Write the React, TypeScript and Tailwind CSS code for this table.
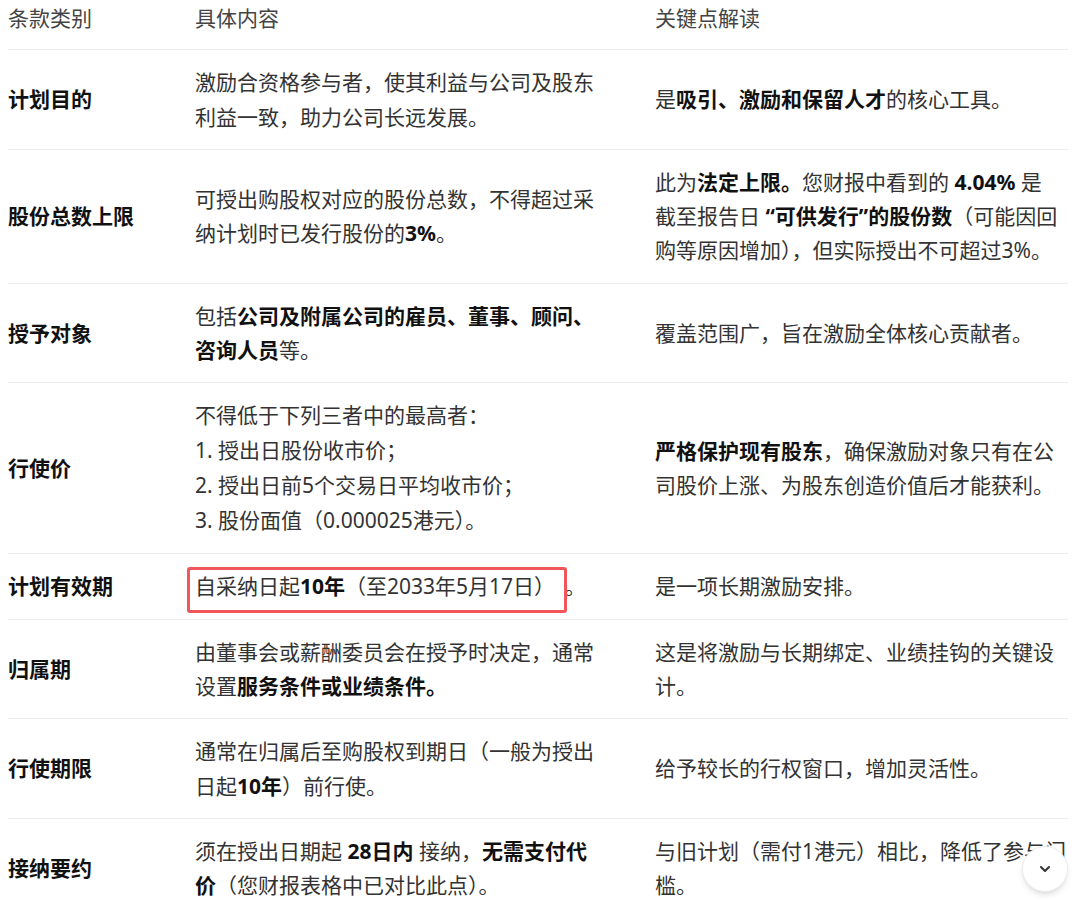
import type { ReactNode } from 'react';
import { HiChevronDown } from 'react-icons/hi';

type Row = {
  term: string;
  content: ReactNode;
  note: ReactNode;
  list?: boolean;
};

const B = ({ children }: { children: ReactNode }) => (
  <strong className="font-bold text-[#111]">{children}</strong>
);

const ROWS: Row[] = [
  {
    term: '计划目的',
    content: '激励合资格参与者，使其利益与公司及股东利益一致，助力公司长远发展。',
    note: (
      <>
        是<B>吸引、激励和保留人才</B>的核心工具。
      </>
    )
  },
  {
    term: '股份总数上限',
    content: (
      <>
        可授出购股权对应的股份总数，不得超过采纳计划时已发行股份的<B>3%</B>。
      </>
    ),
    note: (
      <>
        此为<B>法定上限。</B>您财报中看到的 <B>4.04%</B> 是<br />
        截至报告日 <B>“可供发行”的股份数</B>（可能因回<br />
        购等原因增加），但实际授出不可超过3%。
      </>
    )
  },
  {
    term: '授予对象',
    content: (
      <>
        包括<B>公司及附属公司的雇员、董事、顾问、咨询人员</B>等。
      </>
    ),
    note: '覆盖范围广，旨在激励全体核心贡献者。'
  },
  {
    term: '行使价',
    list: true,
    content: (
      <>
        <div>不得低于下列三者中的最高者：</div>
        <div>1. 授出日股份收市价；</div>
        <div>2. 授出日前5个交易日平均收市价；</div>
        <div>3. 股份面值（0.000025港元）。</div>
      </>
    ),
    note: (
      <>
        <B>严格保护现有股东</B>，确保激励对象只有在公司股价上涨、为股东创造价值后才能获利。
      </>
    )
  },
  {
    term: '计划有效期',
    content: (
      <>
        <span className="relative">
          自采纳日起<B>10年</B>（至2033年5月17日）
          <span className="absolute -left-[8px] -right-[22px] -top-[5px] -bottom-[13px] rounded-[3px] border-[3px] border-[#f0565a]" />
        </span>
        <span className="ml-[20px]">。</span>
      </>
    ),
    note: '是一项长期激励安排。'
  },
  {
    term: '归属期',
    content: (
      <>
        由董事会或薪酬委员会在授予时决定，通常设置<B>服务条件或业绩条件。</B>
      </>
    ),
    note: '这是将激励与长期绑定、业绩挂钩的关键设计。'
  },
  {
    term: '行使期限',
    content: (
      <>
        通常在归属后至购股权到期日（一般为授出日起<B>10年</B>）前行使。
      </>
    ),
    note: '给予较长的行权窗口，增加灵活性。'
  },
  {
    term: '接纳要约',
    content: (
      <>
        须在授出日期起 <B>28日内</B> 接纳，<B>无需支付代价</B>（您财报表格中已对比此点）。
      </>
    ),
    note: '与旧计划（需付1港元）相比，降低了参与门槛。'
  }
];

export default function App() {
  return (
    <div
      className="relative h-[900px] w-full overflow-hidden bg-white text-[21px] leading-[34.3px] text-[#333]"
      style={{ fontFamily: '"Noto Sans", "Noto Sans CJK SC", sans-serif' }}
    >
      <div className="ml-[8px] w-[1060px]">
        {/* header */}
        <div className="grid grid-cols-[187px_460px_413px] border-b border-[#ececec] pt-px pb-[14px] text-[#444]">
          <div>条款类别</div>
          <div>具体内容</div>
          <div>关键点解读</div>
        </div>

        {ROWS.map((row) => (
          <div
            key={row.term}
            className="grid grid-cols-[187px_460px_413px] items-center border-b border-[#ececec] py-[15px]"
          >
            <div className="font-bold text-[#111]">{row.term}</div>
            <div className={row.list ? 'pr-[55px] leading-[35px]' : 'pr-[55px]'}>{row.content}</div>
            <div>{row.note}</div>
          </div>
        ))}
      </div>

      <button className="fixed right-[12px] bottom-[8px] flex size-[46px] items-center justify-center rounded-full border border-[#ececec] bg-white text-[#333] shadow-md">
        <HiChevronDown className="size-5" />
      </button>
    </div>
  );
}
